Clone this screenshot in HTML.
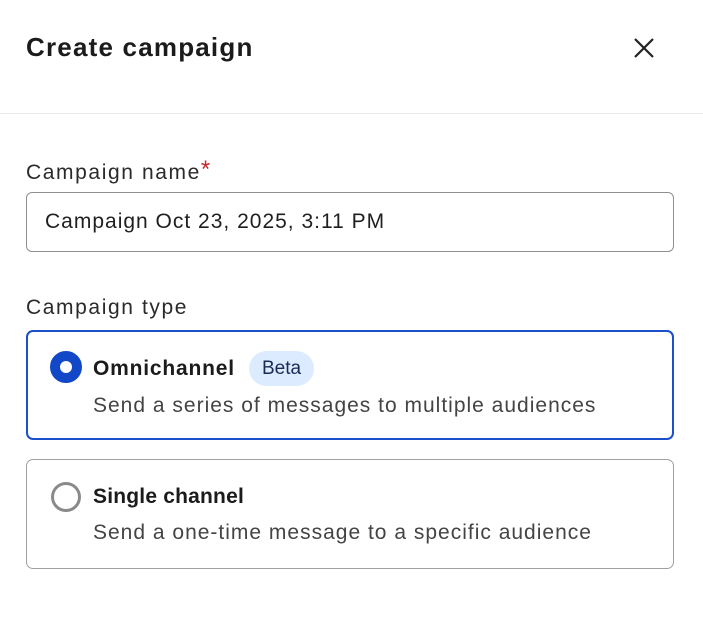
<!DOCTYPE html>
<html><head><style>
*{box-sizing:border-box;margin:0;padding:0}
body{width:703px;height:621px;background:#fff;font-family:"Liberation Sans",sans-serif;color:#1f1f1f;position:relative;overflow:hidden}
.abs{position:absolute;white-space:nowrap}
.t{font-size:21px;letter-spacing:1px}
</style></head><body>
<div class="abs" style="left:26px;top:32px;font-size:26px;font-weight:600;color:#1b1b1b;letter-spacing:1.2px">Create campaign</div>
<svg class="abs" style="left:632px;top:36px" width="24" height="24" viewBox="0 0 24 24"><path d="M3 3L21 21M21 3L3 21" stroke="#222" stroke-width="2.2" fill="none"/></svg>
<div class="abs" style="left:0;top:113px;width:703px;height:1px;background:#e8e8e8"></div>
<div class="abs t" style="left:26px;top:158px;color:#2a2a2a;letter-spacing:1.6px">Campaign name<span style="color:#c4262e;font-size:24px;position:relative;top:-2px;margin-left:0px">*</span></div>
<div class="abs" style="left:26px;top:192px;width:648px;height:60px;border:1px solid #8f8f8f;border-radius:6px"></div>
<div class="abs t" style="left:45px;top:210px;color:#1f1f1f">Campaign Oct 23, 2025, 3:11 PM</div>
<div class="abs t" style="left:26px;top:296px;color:#2a2a2a;letter-spacing:1.6px">Campaign type</div>
<div class="abs" style="left:26px;top:330px;width:648px;height:110px;border:2px solid #1c4fcc;border-radius:7px"></div>
<div class="abs" style="left:50px;top:351px;width:32px;height:32px;border-radius:50%;border:10px solid #1248c8;background:#fff"></div>
<div class="abs" style="left:93px;top:357px;font-size:21px;font-weight:700;color:#1b1b1b;letter-spacing:0.8px">Omnichannel</div>
<div class="abs" style="left:249px;top:351px;width:65px;height:35px;border-radius:18px;background:#dcebff;font-size:19px;color:#1a2a55;text-align:center;line-height:35px">Beta</div>
<div class="abs t" style="left:93px;top:394px;color:#444">Send a series of messages to multiple audiences</div>
<div class="abs" style="left:26px;top:459px;width:648px;height:110px;border:1px solid #a0a0a0;border-radius:7px"></div>
<div class="abs" style="left:51px;top:482px;width:30px;height:30px;border-radius:50%;border:3px solid #8a8a8a;background:#fff"></div>
<div class="abs" style="left:93px;top:485px;font-size:21px;font-weight:700;color:#1b1b1b;letter-spacing:0.2px">Single channel</div>
<div class="abs t" style="left:93px;top:521px;color:#444">Send a one-time message to a specific audience</div>
</body></html>
